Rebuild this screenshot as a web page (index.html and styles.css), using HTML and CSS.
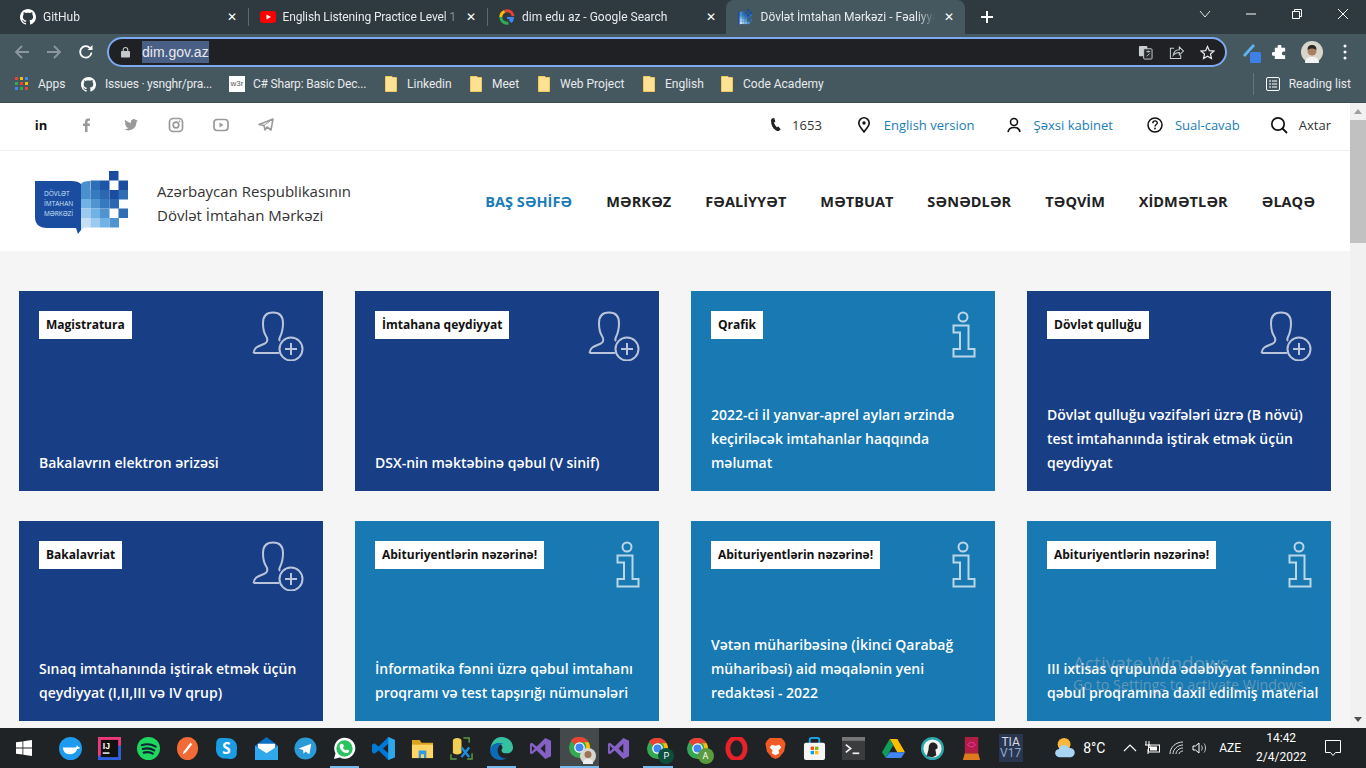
FILE: index.html
```html
<!DOCTYPE html>
<html lang="az">
<head>
<meta charset="utf-8">
<title>Dövlət İmtahan Mərkəzi</title>
<link rel="stylesheet" href="styles.css">
</head>
<body>
<svg class="defs" aria-hidden="true">
  <symbol id="gh" viewBox="0 0 16 16"><path fill="#fff" d="M8 0C3.6 0 0 3.6 0 8c0 3.5 2.3 6.5 5.5 7.6.4.1.5-.2.5-.4v-1.4c-2.2.5-2.7-1-2.7-1-.4-.9-.9-1.2-.9-1.2-.7-.5.1-.5.1-.5.8.1 1.2.8 1.2.8.7 1.2 1.9.9 2.3.7.1-.5.3-.9.5-1.1-1.8-.2-3.6-.9-3.6-4 0-.9.3-1.6.8-2.1-.1-.2-.4-1 .1-2.1 0 0 .7-.2 2.2.8.6-.2 1.3-.3 2-.3s1.4.1 2 .3c1.5-1 2.2-.8 2.2-.8.4 1.1.2 1.9.1 2.1.5.6.8 1.3.8 2.1 0 3.1-1.9 3.7-3.7 3.9.3.3.6.8.6 1.5v2.2c0 .2.1.5.6.4C13.7 14.5 16 11.5 16 8c0-4.4-3.6-8-8-8z"/></symbol>
  <symbol id="folder" viewBox="0 0 12 16"><path fill="#fde293" stroke="#f0c75e" d="M.5.5h6.5l1 1h3.500v14H.5z"/></symbol>
  <symbol id="logo" viewBox="0 0 93 64">
    <path fill="#1a4da0" d="M0 10h36c5 0 8 1 10 3v46l-3 4-2-6H12C4 57 0 53 0 46z"/>
    <path fill="#4a90cd" d="M46 13c1-2 4-3 9-3v9h-9z"/>
    <rect x="74" y="0" width="9.5" height="9.5" fill="#1a4da0"/>
    <rect x="55.500" y="9.500" width="9.500" height="9.500" fill="#2f6db5"/><rect x="65" y="9.500" width="9.500" height="9.500" fill="#1d56a8"/><rect x="83.500" y="9.500" width="9.500" height="9.500" fill="#1a4da0"/>
    <rect x="46" y="19" width="9.500" height="9.500" fill="#4a90cd"/><rect x="55.500" y="19" width="9.500" height="9.500" fill="#3579be"/><rect x="65" y="19" width="9.500" height="9.500" fill="#2c68b2"/><rect x="74.500" y="19" width="9.500" height="9.500" fill="#1a4da0"/><rect x="83.500" y="19" width="9.500" height="9.500" fill="#2f6db5"/>
    <rect x="46" y="28" width="9.500" height="9.500" fill="#70b2e6"/><rect x="55.500" y="28" width="9.500" height="9.500" fill="#4f94d0"/><rect x="65" y="28" width="9.500" height="9.500" fill="#3579be"/><rect x="74.500" y="28" width="9.500" height="9.500" fill="#2c68b2"/>
    <rect x="46" y="37.500" width="9.500" height="9.500" fill="#9bc9ef"/><rect x="55.500" y="37.500" width="9.500" height="9.500" fill="#70b2e6"/><rect x="65" y="37.500" width="9.500" height="9.500" fill="#4f94d0"/><rect x="83.500" y="37.500" width="9.500" height="9.500" fill="#2f6db5"/>
    <path fill="#c5dff5" d="M46 47h9.500v9.500H49l-3 3z"/><rect x="55.500" y="47" width="9.500" height="9.500" fill="#9bc9ef"/><rect x="65" y="47" width="9.500" height="9.500" fill="#70b2e6"/><rect x="74.500" y="47" width="9.500" height="9.500" fill="#4f94d0"/>
  </symbol>
  <symbol id="userplus" viewBox="0 0 52 50"><g fill="none" stroke="#fff" stroke-opacity=".7" stroke-width="2"><path d="M1.500 42C2 36 7 35 12 33c4-1.500 4-5 2-8-2-3-3-7-3-13C11 5 15 1.500 21 1.500S31 5 31 12c0 6-1 10-3 14-1 2-1 3 0 4M1.500 42H27"/><circle cx="39" cy="38" r="11.500"/><path d="M33 38h12M39 32v12"/></g></symbol>
  <symbol id="info" viewBox="0 0 24 47"><g fill="none" stroke="#fff" stroke-opacity=".7" stroke-width="2"><circle cx="11" cy="6" r="4.500"/><path d="M1.500 14.500h15V38h6v7.500H1.500V38H8V21.500H1.500z"/></g></symbol>
  <symbol id="chrome" viewBox="0 0 24 24"><circle cx="12" cy="12" r="11" fill="#34a853"/><path fill="#ea4335" d="M12 1a11 11 0 0 1 9.500 5.500H12A5.500 5.500 0 0 0 7 9.500L3 4.500A11 11 0 0 1 12 1z"/><path fill="#fbbc05" d="M21.500 6.500A11 11 0 0 1 12 23l5-8a5.500 5.500 0 0 0 0-8.500z"/><circle cx="12" cy="12" r="5.500" fill="#fff"/><circle cx="12" cy="12" r="4.200" fill="#4285f4"/></symbol>
  <symbol id="vs" viewBox="0 0 24 24"><path fill="#8661c5" d="M17 1l6 3v16l-6 3-9-9-5 4-2-1V7l2-1 5 4zM17 7l-5 5 5 5zM3 9v6l3-3z"/></symbol>
</svg>

<div class="browser">
  <div class="tabstrip">
    <div class="tab">
      <svg class="fav"><use href="#gh"/></svg><span class="tab-title">GitHub</span><span class="tab-x">✕</span>
    </div>
    <div class="tab sep">
      <svg class="fav" viewBox="0 0 16 16"><rect y="2" width="16" height="12" rx="3" fill="#f00"/><path d="M6.500 5.500v5L11 8z" fill="#fff"/></svg><span class="tab-title">English Listening Practice Level 1</span><span class="tab-x">✕</span>
    </div>
    <div class="tab sep">
      <svg class="fav" viewBox="0 0 16 16"><circle cx="8" cy="8" r="6.200" fill="none" stroke="#ea4335" stroke-width="3" stroke-dasharray="11 40" stroke-dashoffset="-26"/><circle cx="8" cy="8" r="6.200" fill="none" stroke="#fbbc05" stroke-width="3" stroke-dasharray="7 40" stroke-dashoffset="-19"/><circle cx="8" cy="8" r="6.200" fill="none" stroke="#34a853" stroke-width="3" stroke-dasharray="11 40" stroke-dashoffset="-8"/><path d="M8 8h7c0 3-1 5-2.500 6L10 11.500l.5-1.500H8z" fill="#4285f4"/></svg><span class="tab-title">dim edu az - Google Search</span><span class="tab-x">✕</span>
    </div>
    <div class="tab active">
      <svg class="fav" viewBox="47 0 46 60"><use href="#logo" width="93" height="64"/></svg><span class="tab-title">Dövlət İmtahan Mərkəzi - Fəaliyyət</span><span class="tab-x">✕</span>
    </div>
    <svg class="newtab" viewBox="0 0 12 12"><path d="M6 0v12M0 6h12" stroke="#fff" stroke-width="2"/></svg>
    <div class="winctl">
      <svg class="wc" viewBox="0 0 12 12"><path d="M1 3l5 6 5-6" fill="none" stroke="#dfe3e5"/></svg>
      <svg class="wc" viewBox="0 0 12 12"><path d="M1 6h10" stroke="#fff"/></svg>
      <svg class="wc" viewBox="0 0 12 12"><path d="M1.500 3.500h7v7h-7zM3.500 3.500v-2h7v7h-2" fill="none" stroke="#fff"/></svg>
      <svg class="wc" viewBox="0 0 12 12"><path d="M1 1l10 10M11 1L1 11" stroke="#fff"/></svg>
    </div>
  </div>

  <div class="toolbar">
    <svg class="nav-ic" viewBox="0 0 16 16"><path d="M15 8H2M8 2L2 8l6 6" fill="none" stroke="#8a979e" stroke-width="1.800"/></svg>
    <svg class="nav-ic" viewBox="0 0 16 16"><path d="M1 8h13M8 2l6 6-6 6" fill="none" stroke="#8a979e" stroke-width="1.800"/></svg>
    <svg class="nav-ic" viewBox="0 0 16 16"><path d="M13.500 8.500A5.700 5.700 0 1 1 12 4" fill="none" stroke="#fff" stroke-width="1.800"/><path d="M14.500 1v5h-5z" fill="#fff"/></svg>
    <div class="omnibox">
      <svg class="lock" viewBox="0 0 10 12"><path d="M2.500 5V3.500a2.500 2.500 0 0 1 5 0V5" fill="none" stroke="#c5c9cc" stroke-width="1.200"/><rect y="5" width="10" height="7" rx="1" fill="#c5c9cc"/></svg>
      <span class="url">dim.gov.az</span>
      <svg class="omni-ic first" viewBox="0 0 16 16"><rect x="1" y="1" width="9" height="11" rx="1" fill="#c9cdd0"/><rect x="6" y="4" width="9" height="11" rx="1" fill="#2a2c2f" stroke="#c9cdd0"/><path d="M9 7h4M11 6v2M9.500 12l3-3" stroke="#c9cdd0"/></svg>
      <svg class="omni-ic" viewBox="0 0 16 16"><path d="M5.500 3.500H1.500v11h11v-4" fill="none" stroke="#c9cdd0" stroke-width="1.100"/><path d="M4.500 11c.5-4 3-6 6.500-6V2l4.500 4.500L11 10.500V8C8.500 8 6 9 4.500 11z" fill="none" stroke="#c9cdd0" stroke-width="1.100"/></svg>
      <svg class="omni-ic" viewBox="0 0 16 16"><path d="M8 1.500l2 4.500 4.800.5-3.600 3.200 1 4.800L8 12l-4.200 2.500 1-4.800L1.200 6.500 6 6z" fill="none" stroke="#e8eaed" stroke-width="1.300"/></svg>
    </div>
    <div class="ext">
      <svg class="ext-ic" viewBox="0 0 22 22"><path d="M2 14L12 3l2 2L4 16z" fill="#5fb4f0"/><rect x="9" y="11" width="11" height="11" rx="1.500" fill="#3f7fe8"/></svg>
      <svg class="ext-ic small" viewBox="0 0 16 16"><path fill="#fff" d="M6 1.500a2 2 0 0 1 4 0V3h4v4h-1.500a2 2 0 0 0 0 4H14v4H3v-3.500H1.500a2 2 0 0 1 0-4H3V3h3z"/></svg>
      <svg class="avatar" viewBox="0 0 22 22"><circle cx="11" cy="11" r="11" fill="#d8d5cc"/><path d="M4 22c0-5 3-6 7-6s7 1 7 6z" fill="#f3f3f3"/><circle cx="11" cy="10" r="4.500" fill="#a97e62"/><path d="M6.500 9c0-4 2-5 4.500-5s4.500 1 4.500 5c-2-2-7-2-9 0z" fill="#2e2622"/></svg>
      <svg class="dots" viewBox="0 0 4 16"><circle cx="2" cy="2" r="1.500" fill="#fff"/><circle cx="2" cy="8" r="1.500" fill="#fff"/><circle cx="2" cy="14" r="1.500" fill="#fff"/></svg>
    </div>
  </div>

  <div class="bookmarks">
    <div class="bm bm-apps">
      <svg class="bm-ic" viewBox="0 0 14 14"><g><rect width="3" height="3" fill="#ea4335"/><rect x="5" width="3" height="3" fill="#fbbc05"/><rect x="10" width="3" height="3" fill="#4285f4"/><rect y="5" width="3" height="3" fill="#34a853"/><rect x="5" y="5" width="3" height="3" fill="#ea4335"/><rect x="10" y="5" width="3" height="3" fill="#fbbc05"/><rect y="10" width="3" height="3" fill="#4285f4"/><rect x="5" y="10" width="3" height="3" fill="#34a853"/><rect x="10" y="10" width="3" height="3" fill="#ea4335"/></g></svg>Apps
    </div>
    <div class="bm bm-issues"><svg class="bm-ic"><use href="#gh"/></svg>Issues · ysnghr/pra...</div>
    <div class="bm bm-w3"><span class="w3">w3r</span>C# Sharp: Basic Dec...</div>
    <div class="bm bm-li"><svg class="bm-folder"><use href="#folder"/></svg>Linkedin</div>
    <div class="bm bm-meet"><svg class="bm-folder"><use href="#folder"/></svg>Meet</div>
    <div class="bm bm-web"><svg class="bm-folder"><use href="#folder"/></svg>Web Project</div>
    <div class="bm bm-eng"><svg class="bm-folder"><use href="#folder"/></svg>English</div>
    <div class="bm bm-code"><svg class="bm-folder"><use href="#folder"/></svg>Code Academy</div>
    <div class="bm bm-read">
      <svg class="bm-ic" viewBox="0 0 14 14"><rect x=".5" y=".5" width="13" height="13" rx="1.500" fill="none" stroke="#fff"/><path d="M3 4h2M6 4h5M3 7h2M6 7h5M3 10h2M6 10h5" stroke="#fff"/></svg>Reading list
    </div>
  </div>
</div>

<div class="viewport">
  <main class="page">
    <div class="topbar">
      <div class="social">
        <span class="soc soc-in">in</span>
        <svg class="soc-ic" viewBox="0 0 16 16"><path fill="#999" d="M9.500 15V9h2.200l.3-2.500H9.500V5c0-.8.3-1.200 1.200-1.200H12V1.500c-.4 0-1-.1-1.700-.1C8.300 1.400 7 2.600 7 4.700v1.800H5V9h2v6z"/></svg>
        <svg class="soc-ic" viewBox="0 0 16 16"><path fill="#999" d="M15 3.500c-.5.2-1 .4-1.600.4.600-.3 1-.9 1.200-1.500-.5.300-1.100.6-1.800.7a2.800 2.800 0 0 0-4.800 2.600C5.700 5.600 3.600 4.500 2.200 2.800c-.8 1.300-.4 2.900.9 3.800-.5 0-.9-.1-1.300-.4 0 1.400 1 2.500 2.300 2.800-.4.100-.8.100-1.300 0 .4 1.100 1.400 1.900 2.600 1.900A5.700 5.700 0 0 1 1 12.100 8 8 0 0 0 13.400 5c.6-.4 1.200-.9 1.600-1.500z"/></svg>
        <svg class="soc-ic" viewBox="0 0 16 16"><rect x="1.500" y="1.500" width="13" height="13" rx="3.500" fill="none" stroke="#999" stroke-width="1.700"/><circle cx="8" cy="8" r="2.800" fill="none" stroke="#999" stroke-width="1.700"/><circle cx="11.600" cy="4.400" r=".8" fill="#999"/></svg>
        <svg class="soc-ic" viewBox="0 0 16 16"><rect x="1" y="2.500" width="14" height="11" rx="3.200" fill="none" stroke="#999" stroke-width="1.700"/><path d="M6.500 5.500v5L10.500 8z" fill="#999"/></svg>
        <svg class="soc-ic" viewBox="0 0 16 16"><path d="M1 7.500L15 2l-2 11-4-3-2 3-1-4.500z" fill="none" stroke="#999" stroke-width="1.600" stroke-linejoin="round"/><path d="M6 8.500l6-4.500" stroke="#999"/></svg>
      </div>
      <div class="utils">
        <div class="util u-phone"><svg class="u-ic" viewBox="0 0 16 16"><path fill="#222" d="M4 1.500l2.200-.5 1.200 3.500L6 5.600c.4 1.800 1.400 3.300 2.800 4.600l1.500-.8 2.400 2.800-1.600 1.600c-.8.500-2 .3-3-.4C4.800 11.500 3 8 3 3.500c0-.8.400-1.600 1-2z"/></svg><span class="u-plain">1653</span></div>
        <div class="util u-en"><svg class="u-ic" viewBox="0 0 16 16"><path d="M8 15C5 11 2.800 8.700 2.800 6a5.200 5.200 0 0 1 10.400 0c0 2.700-2.200 5-5.200 9z" fill="none" stroke="#111" stroke-width="1.600"/><circle cx="8" cy="6" r="1.700" fill="#111"/></svg><span class="u-link">English version</span></div>
        <div class="util u-cab"><svg class="u-ic" viewBox="0 0 16 16"><circle cx="8" cy="5" r="3.500" fill="none" stroke="#111" stroke-width="1.600"/><path d="M2 15c.5-3 3-4.500 6-4.500s5.500 1.500 6 4.500" fill="none" stroke="#111" stroke-width="1.600"/></svg><span class="u-link">Şəxsi kabinet</span></div>
        <div class="util u-faq"><svg class="u-ic" viewBox="0 0 16 16"><circle cx="8" cy="8" r="7" fill="none" stroke="#111" stroke-width="1.500"/><path d="M5.800 6.200c0-3 4.500-3 4.500-.2 0 1.500-2.300 1.700-2.300 3.500" fill="none" stroke="#111" stroke-width="1.400"/><circle cx="8" cy="11.500" r=".9" fill="#111"/></svg><span class="u-link">Sual-cavab</span></div>
        <div class="util u-search"><svg class="u-ic big" viewBox="0 0 18 18"><circle cx="8" cy="8" r="6.200" fill="none" stroke="#111" stroke-width="1.700"/><path d="M12.500 12.500L17 17" stroke="#111" stroke-width="1.800"/></svg><span class="u-plain">Axtar</span></div>
      </div>
    </div>

    <header class="header">
      <svg class="logo" viewBox="0 0 93 64">
        <use href="#logo"/>
        <text class="logo-t" x="9" y="25">DÖVLƏT</text>
        <text class="logo-t" x="9" y="35">İMTAHAN</text>
        <text class="logo-t" x="9" y="44.500">MƏRKƏZİ</text>
      </svg>
      <div class="brand">Azərbaycan Respublikasının<br>Dövlət İmtahan Mərkəzi</div>
      <nav class="nav">
        <a class="nav-a current">BAŞ SƏHİFƏ</a>
        <a class="nav-a">MƏRKƏZ</a>
        <a class="nav-a">FƏALİYYƏT</a>
        <a class="nav-a">MƏTBUAT</a>
        <a class="nav-a">SƏNƏDLƏR</a>
        <a class="nav-a">TƏQVİM</a>
        <a class="nav-a">XİDMƏTLƏR</a>
        <a class="nav-a">ƏLAQƏ</a>
      </nav>
    </header>

    <section class="cards">
      <article class="card navy">
        <div class="card-top"><span class="tag">Magistratura</span><svg class="i-user"><use href="#userplus"/></svg></div>
        <p class="card-title">Bakalavrın elektron ərizəsi</p>
      </article>
      <article class="card navy">
        <div class="card-top"><span class="tag">İmtahana qeydiyyat</span><svg class="i-user"><use href="#userplus"/></svg></div>
        <p class="card-title">DSX-nin məktəbinə qəbul (V sinif)</p>
      </article>
      <article class="card sky">
        <div class="card-top"><span class="tag">Qrafik</span><svg class="i-info"><use href="#info"/></svg></div>
        <p class="card-title">2022-ci il yanvar-aprel ayları ərzində keçiriləcək imtahanlar haqqında məlumat</p>
      </article>
      <article class="card navy">
        <div class="card-top"><span class="tag">Dövlət qulluğu</span><svg class="i-user"><use href="#userplus"/></svg></div>
        <p class="card-title">Dövlət qulluğu vəzifələri üzrə (B növü) test imtahanında iştirak etmək üçün qeydiyyat</p>
      </article>
      <article class="card navy">
        <div class="card-top"><span class="tag">Bakalavriat</span><svg class="i-user"><use href="#userplus"/></svg></div>
        <p class="card-title">Sınaq imtahanında iştirak etmək üçün qeydiyyat (I,II,III və IV qrup)</p>
      </article>
      <article class="card sky">
        <div class="card-top"><span class="tag">Abituriyentlərin nəzərinə!</span><svg class="i-info"><use href="#info"/></svg></div>
        <p class="card-title">İnformatika fənni üzrə qəbul imtahanı proqramı və test tapşırığı nümunələri</p>
      </article>
      <article class="card sky">
        <div class="card-top"><span class="tag">Abituriyentlərin nəzərinə!</span><svg class="i-info"><use href="#info"/></svg></div>
        <p class="card-title">Vətən müharibəsinə (İkinci Qarabağ müharibəsi) aid məqalənin yeni redaktəsi - 2022</p>
      </article>
      <article class="card sky">
        <div class="card-top"><span class="tag">Abituriyentlərin nəzərinə!</span><svg class="i-info"><use href="#info"/></svg></div>
        <p class="card-title">III ixtisas qrupunda ədəbiyyat fənnindən qəbul proqramına daxil edilmiş material</p>
      </article>
    </section>
  </main>
  <div class="scrollbar">
    <span class="sb-up"></span>
    <div class="sb-track"><div class="sb-thumb"></div></div>
    <span class="sb-down"></span>
  </div>
  <div class="watermark">
    <div class="wm-1">Activate Windows</div>
    <div class="wm-2">Go to Settings to activate Windows.</div>
  </div>
</div>

<footer class="taskbar">
  <svg class="start" viewBox="0 0 16 16"><path fill="#fff" d="M0 2.300L6.500 1.400v6.200H0zM7.300 1.300L16 0v7.600H7.300zM0 8.400h6.500v6.200L0 13.700zM7.300 8.400H16V16l-8.700-1.300z"/></svg>
  <div class="apps">
    <span class="slot"><svg class="ti" viewBox="0 0 24 24"><circle cx="12" cy="12" r="12" fill="#1d9bf0"/><path fill="#fff" d="M4 11h13c1 0 1.500-1.500 1.500-2.500 1 .5 1.500 1.500 1.500 2 1 0 1.500.2 2 .8-1 1.200-2 1.200-3 1.200-1 3.500-4 5.500-8 5.500-4 0-6.500-2.500-7-7z"/><path fill="#1d9bf0" d="M6 9h2v1.500H6zM9 9h2v1.500H9zM12 9h2v1.500h-2zM9 7h2v1.500H9zM12 7h2v1.500h-2z"/></svg></span>
    <span class="slot"><svg class="ti" viewBox="0 0 24 24"><rect width="24" height="24" fill="#2f60e0"/><path d="M0 0h24v8L0 20z" fill="#ee3a7a"/><rect x="3" y="3" width="18" height="18" fill="#111"/><text class="ij" x="5" y="13">IJ</text><rect x="5" y="16" width="7" height="1.500" fill="#fff"/></svg></span>
    <span class="slot"><svg class="ti" viewBox="0 0 24 24"><circle cx="12" cy="12" r="12" fill="#1ed760"/><path d="M5 8.500c5-1.500 10-1 14.500 1.500M6 12.500c4-1 8.500-.7 12 1.500M7 16.300c3.500-.8 7-.5 9.500 1" fill="none" stroke="#123" stroke-width="2.200" stroke-linecap="round"/></svg></span>
    <span class="slot"><svg class="ti" viewBox="0 0 24 24"><ellipse cx="12" cy="12" rx="11" ry="12" fill="#f26b36"/><path d="M7 18l1-3 7-9 2 1.500-7 9z" fill="#fff"/></svg></span>
    <span class="slot"><svg class="ti" viewBox="0 0 24 24"><path d="M6 1h6c7 0 11 4 11 10 0 2-.3 3-.3 5 .3 4-2 7-6 7-2.700 0-3.700-.5-5.700-.5-6 0-10-4-10-10 0-2 .3-4 .3-5C1 4 3 1 6 1z" fill="#1b9de2"/><text class="sk" x="12" y="18" text-anchor="middle">S</text></svg></span>
    <span class="slot"><svg class="ti" viewBox="0 0 24 24"><path d="M0 9l12-9 12 9v15H0z" fill="#0a6fc2"/><path d="M3 7h18v8l-9 4-9-4z" fill="#fff"/><path d="M0 9l12 8 12-8v15H0z" fill="#30a8ee"/></svg></span>
    <span class="slot"><svg class="ti" viewBox="0 0 24 24"><circle cx="12" cy="12" r="11.500" fill="#2b9bd8"/><path d="M5 12l13-5-2 11-4-3-2 2.500-.5-4z" fill="#fff"/></svg></span>
    <span class="slot"><svg class="ti" viewBox="0 0 24 24"><path d="M1 23l1.600-6A11 11 0 1 1 7 21.400z" fill="#fff"/><circle cx="12" cy="12" r="8.500" fill="#29c45f"/><path d="M8.500 7l2 .3.800 2.500-1 1.200c.6 1.300 1.700 2.300 3 3l1.300-1 2.200 1c0 2-1.500 3-3.300 2.700-3.500-.6-6-3.200-6.500-6.200C6.700 8.700 7.300 7.500 8.500 7z" fill="#fff"/></svg></span>
    <span class="slot"><svg class="ti" viewBox="0 0 24 24"><path fill="#0078d4" d="M17 0l7 3v18l-7 3L7 14l-4.500 3.500L0 16V8l2.500-1.500L7 10zM17 7l-5.500 5 5.500 5z"/><path fill="#2ea6ea" d="M17 0l7 3v18l-7 3z"/></svg></span>
    <span class="slot"><svg class="ti" viewBox="0 0 24 24"><path d="M1 3h8l2 3h12v15H1z" fill="#d9a21f"/><path d="M1 8h22v14H1z" fill="#ffd666"/><path d="M8 14h8v8h-2.500v-4h-3v4H8z" fill="#2f9be8"/></svg></span>
    <span class="slot"><svg class="ti" viewBox="0 0 24 24"><path d="M3 4c0-4 9-4 9 0v12c0 3-9 3-9 0z" fill="#f2cf55"/><path d="M14 1h6v5M1 18v5h6M23 17v6h-5" fill="none" stroke="#5b9b46" stroke-width="1.500"/><path d="M12 11l8 10M20 11l-8 10" stroke="#1d8fe0" stroke-width="2.500"/></svg></span>
    <span class="slot"><svg class="ti" viewBox="0 0 24 24"><path d="M12 0c7 0 12 5 12 11 0 4-3 6-6 6-4 0-6-1-6-3 0-1 1-1.500 1-3 0-2.500-3-5-7-4-4 1-5.500 5-6 7C1 6 5 0 12 0z" fill="#35c1a0"/><path d="M0 13c0 7 5 11 11 11 3 0 5-1 7-2-5 1-10-2-10-8 0-4 3-7 6-7-5-2-12 0-14 6z" fill="#0f6ab5"/></svg></span>
    <span class="slot"><svg class="ti"><use href="#vs"/></svg></span>
    <span class="slot active"><svg class="ti"><use href="#chrome"/></svg><svg class="badge" viewBox="0 0 16 16"><circle cx="8" cy="8" r="8" fill="#d8d5cc"/><circle cx="8" cy="6.500" r="3.500" fill="#9b7458"/><path d="M3 16c0-4 2-5 5-5s5 1 5 5z" fill="#eee"/></svg></span>
    <span class="slot"><svg class="ti"><use href="#vs"/></svg></span>
    <span class="slot running"><svg class="ti"><use href="#chrome"/></svg><span class="badge letter p">P</span></span>
    <span class="slot"><svg class="ti"><use href="#chrome"/></svg><span class="badge letter a">A</span></span>
    <span class="slot"><svg class="ti" viewBox="0 0 24 24"><ellipse cx="12" cy="12" rx="9" ry="11" fill="none" stroke="#e8222a" stroke-width="5"/></svg></span>
    <span class="slot"><svg class="ti" viewBox="0 0 24 24"><path d="M6 1h12l3 3 1.500 3-1.500 8-5 6-4 2-4-2-5-6L1.500 7 3 4z" fill="#f15a22"/><path d="M8 8l4 1 4-1 2 3-3 3 1 3-4 2-4-2 1-3-3-3z" fill="#fff"/></svg></span>
    <span class="slot"><svg class="ti" viewBox="0 0 24 24"><path d="M7 7V3a2 2 0 0 1 2-2h6a2 2 0 0 1 2 2v4" fill="none" stroke="#1ba1e2" stroke-width="2"/><rect x="1" y="6" width="22" height="18" rx="2" fill="#f5f5f5"/><rect x="8" y="10" width="3.500" height="3.500" fill="#f25022"/><rect x="12.500" y="10" width="3.500" height="3.500" fill="#7fba00"/><rect x="8" y="14.500" width="3.500" height="3.500" fill="#00a4ef"/><rect x="12.500" y="14.500" width="3.500" height="3.500" fill="#ffb900"/></svg></span>
    <span class="slot"><svg class="ti" viewBox="0 0 24 24"><rect width="24" height="24" fill="#3a3c3e"/><rect width="24" height="4" fill="#777"/><path d="M4 8l5 4-5 4" fill="none" stroke="#eee" stroke-width="1.800"/><path d="M11 17h7" stroke="#eee" stroke-width="1.800"/></svg></span>
    <span class="slot"><svg class="ti" viewBox="0 0 24 24"><path d="M8 2h8l8 14H16z" fill="#fbbc04"/><path d="M8 2L0 16l4 6 8-14z" fill="#0f9d58"/><path d="M4 22l4-6h16l-4 6z" fill="#4285f4"/></svg></span>
    <span class="slot"><svg class="ti" viewBox="0 0 24 24"><circle cx="12" cy="12" r="12" fill="#2aa7ac"/><circle cx="12" cy="12" r="9.500" fill="#f2f2f0"/><path d="M6 20c1-4 2-6 2-9 0-4 3-6 6-5 3 1 4 4 3 6l-2 1 1 6-4 2z" fill="#222"/></svg></span>
    <span class="slot"><svg class="ti" viewBox="0 0 24 24"><path d="M3 24l2-7h14l2 7z" fill="#e07a1f"/><rect x="5" y="0" width="14" height="17" fill="#b01e45"/><path d="M8 8c2-3 6-3 8 0-2 3-6 3-8 0z" fill="none" stroke="#f3c" stroke-width="1"/></svg></span>
    <span class="slot"><span class="tia">TIA<br><b class="tia-b">V17</b></span></span>
  </div>
  <div class="tray">
    <svg class="t-weather" viewBox="0 0 24 24"><circle cx="11" cy="8" r="7" fill="#f6b73c"/><path d="M6 22a4.500 4.500 0 0 1-.5-9 6 6 0 0 1 11-1 5 5 0 0 1 2 10z" fill="#a9d4f2"/></svg>
    <span class="t-temp">8°C</span>
    <svg class="t-ic caret" viewBox="0 0 14 14"><path d="M1 10l6-6 6 6" fill="none" stroke="#fff" stroke-width="1.200"/></svg>
    <svg class="t-ic batt" viewBox="0 0 16 14"><rect x="4.500" y="4" width="11" height="7" fill="none" stroke="#fff"/><rect x="6" y="5.500" width="7" height="4" fill="#fff"/><path d="M2 0v4M5 0v4M1 4h5v2l-2 2v5" fill="none" stroke="#fff"/></svg>
    <svg class="t-ic wifi" viewBox="0 0 16 14"><path d="M1 13C1 6 7 1 14 1M4 13c0-5 5-9 10-9M7 13c0-3 3-6 7-6M10 13c0-1.500 2-3 4-3" fill="none" stroke="#ddd"/></svg>
    <svg class="t-ic vol" viewBox="0 0 16 14"><path d="M1 5h2.500L7 2v10L3.500 9H1z" fill="none" stroke="#fff"/><path d="M9.500 4.500c1 1.500 1 3.500 0 5M12 2.500c2 2.500 2 6.500 0 9" fill="none" stroke="#ccc"/></svg>
    <span class="t-lang">AZE</span>
    <div class="t-clock"><span>14:42</span><span>2/4/2022</span></div>
    <svg class="t-note" viewBox="0 0 16 16"><path d="M.5.500h15v12h-5l-2.500 3-2.500-3h-5z" fill="none" stroke="#fff"/></svg>
  </div>
</footer>
</body>
</html>
```
FILE: styles.css
```css
* { box-sizing: border-box; }
html, body { margin: 0; height: 768px; overflow: hidden; }
body { width: 1366px; display: flex; flex-direction: column; background: #fff; font-family: "Open Sans", "Noto Sans", sans-serif; }
.defs { position: absolute; width: 0; height: 0; }

/* browser chrome */
.browser { flex: none; height: 103px; background: #45585f; border-bottom: 1px solid #3b4c53; font-family: Roboto, "Liberation Sans", sans-serif; color: #fff; font-size: 12px; }
.tabstrip { height: 34px; background: #2e3a40; display: flex; align-items: stretch; padding-left: 8px; }
.tab { position: relative; width: 239.500px; display: flex; align-items: center; padding: 0 8px 0 12px; }
.tab.sep::before { content: ""; position: absolute; left: 0; top: 8px; height: 18px; width: 1px; background: #5c6a70; }
.tab.active { background: #45585f; border-radius: 8px 8px 0 0; margin-left: -1px; padding-left: 12px; }
.tab .fav { width: 16px; height: 16px; flex: none; }
.tab-title { flex: 1; margin: 0 2px 0 7px; white-space: nowrap; overflow: hidden; font-size: 12px; color: #e8eaed; -webkit-mask-image: linear-gradient(to right, #000 calc(100% - 18px), transparent); mask-image: linear-gradient(to right, #000 calc(100% - 18px), transparent); }
.tab:nth-child(2) .tab-title { letter-spacing: -.12px; }
.tab.active .tab-title { margin-right: 6px; }
.tab-x { flex: none; width: 16px; text-align: center; font-size: 12px; color: #fff; }
.newtab { width: 12px; height: 12px; margin: 11px 0 0 16px; }
.winctl { margin-left: auto; display: flex; align-items: flex-start; }
.wc { width: 12px; height: 12px; margin: 8px 17px 0 17px; }
.winctl .wc:first-child { margin-right: 17px; }
.toolbar { height: 34px; display: flex; align-items: center; padding: 2px 0 0 14px; }
.nav-ic { width: 16px; height: 16px; margin-right: 16px; }
.omnibox { width: 1120px; height: 30px; margin-left: -3px; background: #202124; border: 2px solid #7da9f0; border-radius: 15px; display: flex; align-items: center; padding: 0 10px 0 12px; }
.lock { width: 9px; height: 12px; flex: none; }
.url { margin-left: 12px; background: #4a5f85; color: #e8eaed; font: 14px/22px "Liberation Sans", Arial, sans-serif; }
.omni-ic { width: 15px; height: 15px; margin-left: 16px; }
.omni-ic.first { margin-left: auto; }
.ext { display: flex; align-items: center; margin-left: 14px; }
.ext-ic { width: 22px; height: 22px; }
.ext-ic.small { width: 15px; height: 15px; margin-left: 9px; }
.avatar { width: 22px; height: 22px; margin-left: 14px; }
.dots { width: 4px; height: 16px; margin-left: 20px; }
.bookmarks { height: 32px; display: flex; align-items: center; font-size: 12px; color: #e8eaed; }
.bm { display: flex; align-items: center; white-space: nowrap; flex: none; }
.bm-ic { width: 14px; height: 14px; flex: none; margin-right: 9px; }
.bm-issues .bm-ic { width: 15px; height: 15px; }
.bm-folder { width: 12px; height: 16px; flex: none; margin-right: 10px; }
.w3 { width: 16px; height: 16px; background: #fff; color: #555; font: 8px/16px "Liberation Sans", sans-serif; text-align: center; margin-right: 8px; letter-spacing: 0; }
.bm-apps { margin-left: 15px; width: 66px; }
.bm-issues { width: 148px; letter-spacing: -.2px; }
.bm-w3 { width: 156px; letter-spacing: -.2px; }
.bm-li { width: 85px; }
.bm-meet { width: 68px; }
.bm-web { width: 105px; }
.bm-eng { width: 78px; }
.bm-code { width: 120px; }
.bm-read { margin-left: auto; padding: 0 15px 0 12px; border-left: 1px solid #66767d; height: 22px; }

/* page */
.viewport { position: relative; flex: none; height: 625px; display: flex; overflow: hidden; }
.page { width: 1350px; flex: none; height: 625px; overflow: hidden; background: #f5f5f5; }
.topbar { height: 48px; background: #fff; border-bottom: 1px solid #f0f0f0; display: flex; align-items: center; justify-content: space-between; padding: 0 19px 4px 33px; }
.social { display: flex; align-items: center; gap: 29px; }
.soc { width: 16px; text-align: center; font: 700 13px/16px "Open Sans", sans-serif; color: #111; }
.soc-ic { width: 16px; height: 16px; }
.utils { display: flex; align-items: center; font-size: 13px; }
.util { display: flex; align-items: center; }
.u-ic { width: 16px; height: 16px; flex: none; margin-right: 12px; }
.u-ic.big { width: 18px; height: 18px; margin-right: 11px; }
.u-plain { color: #333; }
.u-link { color: #1a7db8; }
.u-en { margin-left: 34px; }
.u-cab { margin-left: 31px; }
.u-faq { margin-left: 34px; }
.u-search { margin-left: 30px; }
.u-phone .u-ic { margin-right: 8px; }
.header { height: 100px; background: #fff; display: flex; align-items: center; padding: 0 35px 0 35px; }
.logo { width: 93px; height: 64px; flex: none; margin-top: 3px; }
.logo-t { font: 6.500px "Open Sans", sans-serif; fill: #cfe0f4; }
.ij { font: 700 9px "Liberation Sans", sans-serif; fill: #fff; }
.sk { font: 700 16px "Open Sans", sans-serif; fill: #fff; }
.brand { margin: 4px 0 0 29px; font-size: 15px; line-height: 24px; color: #333; }
.nav { margin-left: auto; display: flex; gap: 34px; }
.nav-a { font-size: 14.500px; font-weight: 700; color: #222; white-space: nowrap; }
.nav-a.current { color: #1a7db8; }
.cards { display: grid; grid-template-columns: repeat(4, 304px); grid-auto-rows: 200px; gap: 30px 32px; padding: 40px 0 0 19px; }
.card { display: flex; flex-direction: column; padding: 20px 8px 16px 20px; color: #fff; }
.navy { background: #183e85; }
.sky { background: #1879b3; }
.card-top { display: flex; justify-content: space-between; align-items: flex-start; padding-right: 12px; }
.tag { background: #fff; color: #111; font-size: 12px; font-weight: 700; height: 28px; line-height: 28px; padding: 0 7px; white-space: nowrap; }
.i-user { width: 52px; height: 50px; flex: none; margin-right: -1px; }
.i-info { width: 24px; height: 47px; flex: none; margin-right: -1px; }
.card-title { margin: auto 0 0; font-size: 14px; font-weight: 600; line-height: 24px; }
.scrollbar { width: 16px; flex: none; background: #f1f1f1; display: flex; flex-direction: column; align-items: center; }
.sb-up, .sb-down { flex: none; width: 0; height: 0; border-left: 4px solid transparent; border-right: 4px solid transparent; }
.sb-up { border-bottom: 5px solid #a0a0a0; margin: 6px 0; }
.sb-down { border-top: 5px solid #505050; margin: 6px 0; }
.sb-track { flex: 1; width: 100%; }
.sb-thumb { height: 123px; background: #c1c1c1; }
.watermark { position: absolute; left: 1073px; top: 548px; color: rgba(190,190,190,.45); font-family: "Open Sans", sans-serif; pointer-events: none; }
.wm-1 { font-size: 19px; line-height: 24px; }
.wm-2 { font-size: 14.300px; line-height: 20px; white-space: nowrap; }

/* taskbar */
.taskbar { flex: none; height: 40px; background: #202325; display: flex; align-items: center; color: #fff; font-family: Roboto, "Liberation Sans", sans-serif; font-size: 12px; }
.start { width: 16px; height: 16px; margin-left: 16px; flex: none; }
.apps { display: flex; margin-left: 18.500px; height: 40px; }
.slot { position: relative; width: 39.200px; height: 40px; display: flex; align-items: center; justify-content: center; flex: none; }
.slot.active { background: #444a4c; border-bottom: 2px solid #76b9ed; }
.slot:nth-child(8)::after, .slot:nth-child(12)::after, .slot.running::after { content: ""; position: absolute; left: 5px; right: 5px; bottom: 0; height: 2px; background: #76b9ed; }
.ti { width: 23px; height: 23px; }
.badge { position: absolute; left: 20px; top: 20px; width: 16px; height: 16px; }
.letter { border-radius: 50%; font-size: 9px; line-height: 16px; text-align: center; color: #fff; }
.letter.p { background: #0b4f3c; }
.letter.a { background: #5a9b3f; }
.tia { font: 12px/11px Roboto, sans-serif; background: #2a3550; color: #d6dde6; width: 24px; height: 28px; text-align: center; padding-top: 3px; }
.tia-b { font-weight: 400; color: #8fa9cf; }
.tray { display: flex; align-items: center; margin-left: 24px; height: 40px; flex: none; }
.t-weather { width: 22px; height: 24px; }
.t-temp { margin-left: 7px; font-size: 14px; width: 40px; }
.t-ic { width: 14px; height: 14px; }
.caret { margin-left: 0; }
.batt { margin-left: 7px; width: 16px; }
.wifi { margin-left: 9px; width: 16px; }
.vol { margin-left: 7px; width: 16px; }
.t-lang { margin-left: 11px; font-size: 12px; width: 26px; }
.t-clock { display: flex; flex-direction: column; align-items: center; width: 62px; margin-left: 5px; line-height: 19px; }
.t-note { width: 16px; height: 16px; margin-left: 13px; }
```
